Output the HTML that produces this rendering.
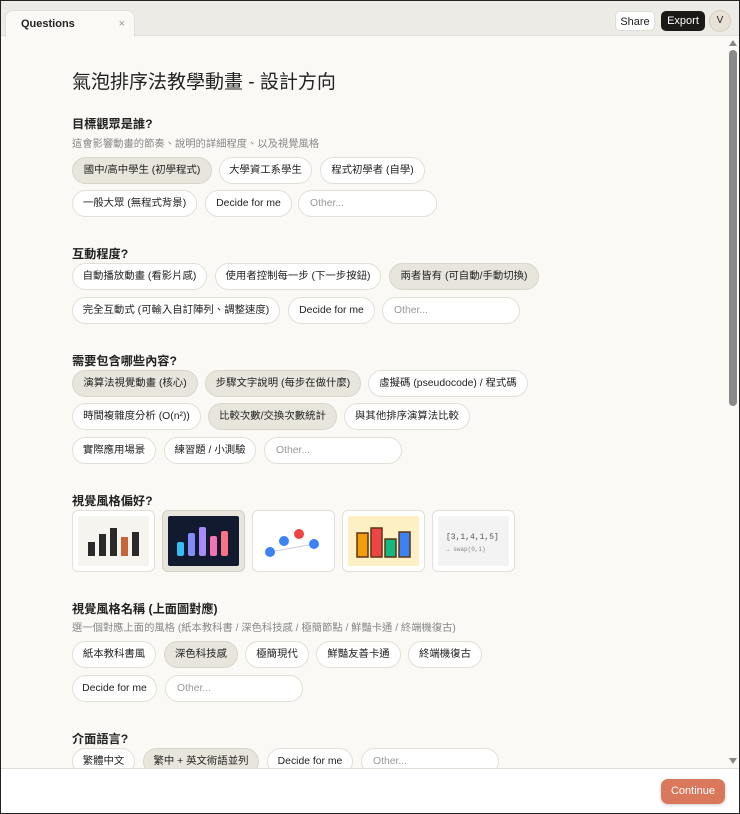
<!DOCTYPE html>
<html><head><meta charset="utf-8"><style>
*{box-sizing:border-box;margin:0;padding:0}
body{width:740px;height:814px;overflow:hidden;font-family:"Liberation Sans","Noto Sans CJK TC",sans-serif;background:#faf9f6;position:relative;color:#222}
.frame{position:absolute;inset:0;border:1px solid #222;pointer-events:none;z-index:10}
.top{position:absolute;left:0;top:0;width:740px;height:36px;background:#edebe6;border-bottom:1px solid #e2dfd8}
.tab{position:absolute;left:5px;top:10px;width:130px;height:27px;background:#faf9f6;border:1px solid #e2dfd8;border-bottom:none;border-radius:8px 8px 0 0;font-size:11px;font-weight:bold;padding:7px 0 0 15px}
.tab span{position:absolute;right:9px;top:7px;color:#999;font-weight:normal}
.btn{position:absolute;top:11px;height:20px;border-radius:5px;font-size:11px;text-align:center;line-height:20px}
.a{position:absolute}
h1{position:absolute;left:72px;top:67px;font-size:19px;font-weight:normal}
.q{position:absolute;left:72px;font-size:12.2px;font-weight:bold}
.s{position:absolute;left:72px;font-size:10.3px;color:#888}
.p{position:absolute;height:27px;border:1px solid #e2dfd8;background:#fff;border-radius:14px;font-size:10.4px;text-align:center;line-height:25px;color:#222;white-space:nowrap}
.p.sel{background:#e8e5dc;border-color:#d9d5cb}
.p.o{text-align:left;padding-left:11px;color:#999}
.c{position:absolute;top:510px;width:83px;height:62px;border:1px solid #e2dfd8;background:#fff;border-radius:6px;padding:5px}
.c.sel{background:#e8e5dc;border-color:#d4d0c6}
.c .in{width:100%;height:100%;border-radius:2px;position:relative}
.foot{position:absolute;left:0;top:768px;width:740px;height:46px;background:#fff;border-top:1px solid #e2dfd8}
</style></head><body>
<div class="top">
<div class="tab">Questions<span>×</span></div>
<div class="btn" style="left:615px;width:40px;background:#fff;border:1px solid #ddd">Share</div>
<div class="btn" style="left:661px;width:44px;background:#1c1a18;color:#fff">Export</div>
<div class="a" style="left:709px;top:10px;width:22px;height:22px;border-radius:50%;background:#e8e2d6;border:1px solid #d6cfc0;font-size:10px;text-align:center;line-height:20px">V</div>
</div>
<div class="a" style="left:729px;top:40px;width:0;height:0;border-left:4px solid transparent;border-right:4px solid transparent;border-bottom:6px solid #888"></div>
<div class="a" style="left:729px;top:50px;width:8px;height:356px;background:#8a8a8a;border-radius:4px"></div>

<h1>氣泡排序法教學動畫 - 設計方向</h1>

<div class="q" style="top:114px">目標觀眾是誰?</div>
<div class="s" style="top:135px">這會影響動畫的節奏、說明的詳細程度、以及視覺風格</div>
<div class="p sel" style="left:72px;top:157px;width:140px">國中/高中學生 (初學程式)</div>
<div class="p" style="left:219px;top:157px;width:93px">大學資工系學生</div>
<div class="p" style="left:320px;top:157px;width:105px">程式初學者 (自學)</div>
<div class="p" style="left:72px;top:190px;width:125px">一般大眾 (無程式背景)</div>
<div class="p" style="left:205px;top:190px;width:87px">Decide for me</div>
<div class="p o" style="left:298px;top:190px;width:139px">Other...</div>

<div class="q" style="top:244px">互動程度?</div>
<div class="p" style="left:72px;top:263px;width:135px">自動播放動畫 (看影片感)</div>
<div class="p" style="left:215px;top:263px;width:166px">使用者控制每一步 (下一步按鈕)</div>
<div class="p sel" style="left:389px;top:263px;width:150px">兩者皆有 (可自動/手動切換)</div>
<div class="p" style="left:72px;top:297px;width:208px">完全互動式 (可輸入自訂陣列、調整速度)</div>
<div class="p" style="left:288px;top:297px;width:87px">Decide for me</div>
<div class="p o" style="left:382px;top:297px;width:138px">Other...</div>

<div class="q" style="top:351px">需要包含哪些內容?</div>
<div class="p sel" style="left:72px;top:370px;width:126px">演算法視覺動畫 (核心)</div>
<div class="p sel" style="left:205px;top:370px;width:156px">步驟文字說明 (每步在做什麼)</div>
<div class="p" style="left:368px;top:370px;width:160px">虛擬碼 (pseudocode) / 程式碼</div>
<div class="p" style="left:72px;top:403px;width:129px">時間複雜度分析 (O(n²))</div>
<div class="p sel" style="left:208px;top:403px;width:129px">比較次數/交換次數統計</div>
<div class="p" style="left:344px;top:403px;width:126px">與其他排序演算法比較</div>
<div class="p" style="left:72px;top:437px;width:84px">實際應用場景</div>
<div class="p" style="left:164px;top:437px;width:92px">練習題 / 小測驗</div>
<div class="p o" style="left:264px;top:437px;width:138px">Other...</div>

<div class="q" style="top:491px">視覺風格偏好?</div>
<div class="c" style="left:72px"><div class="in" style="background:#f6f4ef"><svg width="73" height="52"><rect x="10" y="26" width="7" height="14" fill="#2a2a2a"/><rect x="21" y="18" width="7" height="22" fill="#2a2a2a"/><rect x="32" y="12" width="7" height="28" fill="#2a2a2a"/><rect x="43" y="21" width="7" height="19" fill="#c9643a"/><rect x="54" y="16" width="7" height="24" fill="#2a2a2a"/></svg></div></div>
<div class="c sel" style="left:162px"><div class="in" style="background:#111a2e"><svg width="73" height="52"><rect x="9" y="26" width="7" height="14" rx="2" fill="#38bdf8"/><rect x="20" y="17" width="7" height="23" rx="2" fill="#818cf8"/><rect x="31" y="11" width="7" height="29" rx="2" fill="#a78bfa"/><rect x="42" y="20" width="7" height="20" rx="2" fill="#f472b6"/><rect x="53" y="15" width="7" height="25" rx="2" fill="#fb7185"/></svg></div></div>
<div class="c" style="left:252px"><div class="in" style="background:#fff"><svg width="73" height="52"><line x1="12" y1="36" x2="56" y2="28" stroke="#ccd" stroke-width="1"/><circle cx="12" cy="36" r="5" fill="#3b82f6"/><circle cx="26" cy="25" r="5" fill="#3b82f6"/><circle cx="41" cy="18" r="5" fill="#ef4444"/><circle cx="56" cy="28" r="5" fill="#3b82f6"/></svg></div></div>
<div class="c" style="left:342px"><div class="in" style="background:#fdf0c4"><svg width="73" height="52"><rect x="9" y="17" width="11" height="24" fill="#f59e0b" stroke="#5b3414" stroke-width="1.5"/><rect x="23" y="12" width="11" height="29" fill="#ef4444" stroke="#5b3414" stroke-width="1.5"/><rect x="37" y="23" width="11" height="18" fill="#10b981" stroke="#5b3414" stroke-width="1.5"/><rect x="51" y="16" width="11" height="25" fill="#3b82f6" stroke="#5b3414" stroke-width="1.5"/></svg></div></div>
<div class="c" style="left:432px"><div class="in" style="background:#f3f3f3;font-family:'Liberation Mono',monospace;color:#555"><div style="position:absolute;left:8px;top:17px;font-size:8px">[3,1,4,1,5]</div><div style="position:absolute;left:8px;top:30px;font-size:6px;color:#888">→ swap(0,1)</div></div></div>

<div class="q" style="top:599px">視覺風格名稱 (上面圖對應)</div>
<div class="s" style="top:619px">選一個對應上面的風格 (紙本教科書 / 深色科技感 / 極簡節點 / 鮮豔卡通 / 終端機復古)</div>
<div class="p" style="left:72px;top:641px;width:84px">紙本教科書風</div>
<div class="p sel" style="left:164px;top:641px;width:74px">深色科技感</div>
<div class="p" style="left:245px;top:641px;width:64px">極簡現代</div>
<div class="p" style="left:316px;top:641px;width:85px">鮮豔友善卡通</div>
<div class="p" style="left:408px;top:641px;width:74px">終端機復古</div>
<div class="p" style="left:72px;top:675px;width:85px">Decide for me</div>
<div class="p o" style="left:165px;top:675px;width:138px">Other...</div>

<div class="q" style="top:729px">介面語言?</div>
<div class="p" style="left:72px;top:748px;width:63px">繁體中文</div>
<div class="p sel" style="left:143px;top:748px;width:116px">繁中 + 英文術語並列</div>
<div class="p" style="left:267px;top:748px;width:86px">Decide for me</div>
<div class="p o" style="left:361px;top:748px;width:138px">Other...</div>
<div class="a" style="left:729px;top:758px;width:0;height:0;border-left:4px solid transparent;border-right:4px solid transparent;border-top:6px solid #888"></div>

<div class="foot"><div class="a" style="left:661px;top:10px;width:64px;height:25px;background:#d9785a;border-radius:7px;color:#fff;font-size:11px;text-align:center;line-height:25px;box-shadow:0 1px 3px rgba(0,0,0,.2)">Continue</div></div>
<div class="frame"></div>
</body></html>
